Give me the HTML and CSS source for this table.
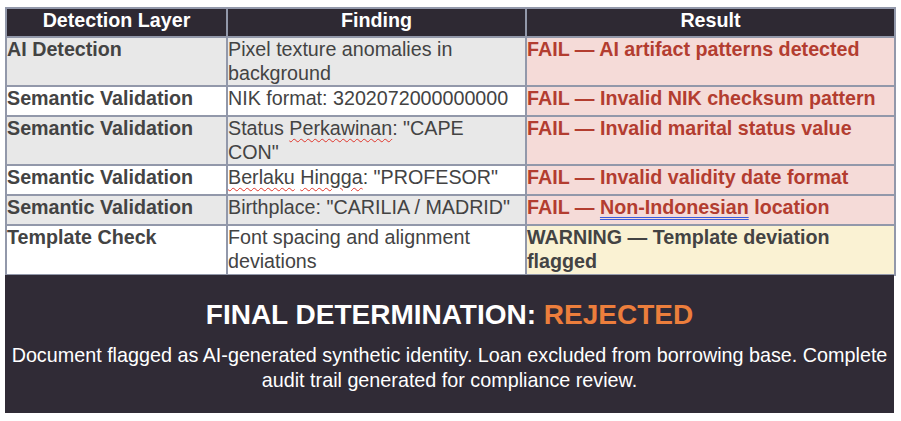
FILE: index.html
```html
<!DOCTYPE html>
<html>
<head>
<meta charset="utf-8">
<link rel="stylesheet" href="styles.css">
</head>
<body>
<div class="page">
  <table class="report">
    <colgroup>
      <col class="c1"><col class="c2"><col class="c3">
    </colgroup>
    <thead>
      <tr><th>Detection Layer</th><th>Finding</th><th>Result</th></tr>
    </thead>
    <tbody>
      <tr class="gray">
        <td class="layer">AI Detection</td>
        <td>Pixel texture anomalies in background</td>
        <td class="fail">FAIL — AI artifact patterns detected</td>
      </tr>
      <tr>
        <td class="layer">Semantic Validation</td>
        <td>NIK format: 3202072000000000</td>
        <td class="fail">FAIL — Invalid NIK checksum pattern</td>
      </tr>
      <tr class="gray">
        <td class="layer">Semantic Validation</td>
        <td>Status <span class="spell">Perkawinan</span>: "CAPE CON"</td>
        <td class="fail">FAIL — Invalid marital status value</td>
      </tr>
      <tr>
        <td class="layer">Semantic Validation</td>
        <td><span class="spell">Berlaku</span> <span class="spell">Hingga</span>: "PROFESOR"</td>
        <td class="fail">FAIL — Invalid validity date format</td>
      </tr>
      <tr class="gray">
        <td class="layer">Semantic Validation</td>
        <td>Birthplace: "CARILIA / MADRID"</td>
        <td class="fail">FAIL — <span class="grammar">Non-Indonesian</span> location</td>
      </tr>
      <tr>
        <td class="layer">Template Check</td>
        <td>Font spacing and alignment deviations</td>
        <td class="warn">WARNING — Template deviation flagged</td>
      </tr>
    </tbody>
  </table>
  <section class="verdict">
    <h2 class="verdict-title">FINAL DETERMINATION: <span class="rejected">REJECTED</span></h2>
    <p class="verdict-text">Document flagged as AI-generated synthetic identity. Loan excluded from borrowing base. Complete audit trail generated for compliance review.</p>
  </section>
</div>
</body>
</html>
```

FILE: styles.css
```css
html, body {
  margin: 0;
  padding: 0;
  background: #ffffff;
}

body {
  font-family: "Liberation Sans", Arial, sans-serif;
}

.page {
  padding: 7px 0 0 5px;
  width: 889px;
}

.report {
  border-collapse: collapse;
  width: 889px;
  table-layout: fixed;
  font-size: 19.7px;
  line-height: 23.6px;
  color: #434343;
}

.c1 { width: 221px; }
.c2 { width: 299px; }
.c3 { width: 369px; }

.report th,
.report td {
  border: 2px solid #9298aa;
  padding: 0 8px 0 0;
  vertical-align: top;
  text-align: left;
}

.report th {
  background: #2e2933;
  color: #ffffff;
  font-weight: bold;
  text-align: center;
  height: 26px;
  padding: 0 2px 1px;
}

.report tbody tr {
  height: 30px;
  background: #ffffff;
}

.report tbody tr.gray {
  background: #e8e8e8;
}

.layer {
  font-weight: bold;
}

.report td.fail {
  background: #f5dbd8;
  color: #b33d30;
  font-weight: bold;
}

.report td.warn {
  background: #faf2d3;
  color: #434343;
  font-weight: bold;
}

.spell {
  text-decoration: underline wavy #e0352b;
  text-decoration-thickness: 1px;
  text-underline-offset: 3px;
}

.grammar {
  text-decoration: underline double #3b5bdb;
  text-decoration-thickness: 1px;
  text-underline-offset: 3px;
}

.verdict {
  background: #302b36;
  color: #ffffff;
  text-align: center;
  padding: 25px 2px 20px;
  margin-top: -1px;
}

.verdict-title {
  margin: 0;
  font-size: 28px;
  line-height: 30px;
  font-weight: bold;
}

.rejected {
  color: #ec7e3c;
}

.verdict-text {
  margin: 13px 0 0;
  font-size: 19.75px;
  line-height: 25px;
}
```
